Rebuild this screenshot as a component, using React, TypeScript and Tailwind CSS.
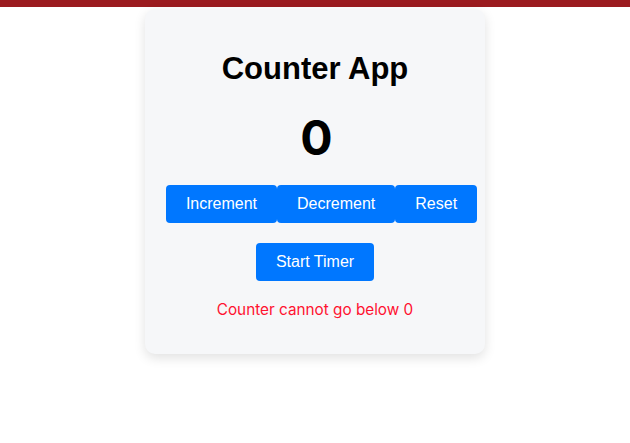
import React from "react";

export default function App() {
  return (
    <div className="min-h-[443px] bg-white">
      <div className="h-[7px] bg-[#9b1b1f]" />
      <div className="flex justify-center pt-[2px]">
        <div className="w-[340px] rounded-[10px] bg-[#f6f7f9] px-5 pt-5 pb-[35px] shadow-[0_4px_12px_rgba(0,0,0,0.12)] flex flex-col items-center">
          <h1 className="mt-[21px] mb-[22px] text-[31px] leading-[37px] font-bold text-black font-['Liberation_Sans',Arial,sans-serif]">
            Counter App
          </h1>
          <div className="pt-[3px] pl-[3px] text-[48px] leading-[52px] font-bold text-black font-['Inter',sans-serif]">0</div>
          <div className="mt-[21px] flex pl-[13px] font-['Liberation_Sans',Arial,sans-serif] text-[16px] text-white">
            <button className="h-[38px] rounded px-5 bg-[#0077ff]">Increment</button>
            <button className="h-[38px] rounded px-5 bg-[#0077ff]">Decrement</button>
            <button className="h-[38px] rounded px-5 bg-[#0077ff]">Reset</button>
          </div>
          <button className="mt-5 h-[38px] rounded px-5 bg-[#0077ff] font-['Liberation_Sans',Arial,sans-serif] text-[16px] text-white">
            Start Timer
          </button>
          <p className="mt-5 text-[15.3px] leading-[18px] text-[#ff1230] font-['Inter',sans-serif]">
            Counter cannot go below 0
          </p>
        </div>
      </div>
    </div>
  );
}
